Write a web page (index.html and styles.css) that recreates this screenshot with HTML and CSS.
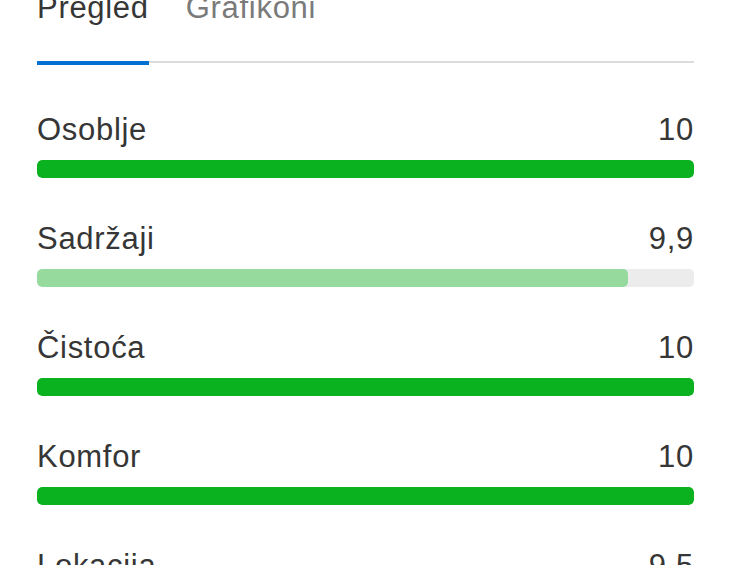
FILE: index.html
```html
<!DOCTYPE html>
<html>
	<head>
		<meta content="text/html;charset=utf-8" http-equiv="Content-Type">
		<meta name="viewport" content="initial-scale=1, user-scalable=no">
		<link rel="stylesheet" href="styles.css">
	</head>
	<body>
		<div class="wrapper">
			<div class="tabs">
				<span class="tab active">Pregled</span>
				<span class="tab">Grafikoni</span>
			</div>

			<div class="scores">
				<div class="score">
					<div class="score-head"><span>Osoblje</span><span>10</span></div>
					<div class="track"><div class="fill" style="width: 100%"></div></div>
				</div>
				<div class="score">
					<div class="score-head"><span>Sadržaji</span><span>9,9</span></div>
					<div class="track"><div class="fill fill-light" style="width: 90%"></div></div>
				</div>
				<div class="score">
					<div class="score-head"><span>Čistoća</span><span>10</span></div>
					<div class="track"><div class="fill" style="width: 100%"></div></div>
				</div>
				<div class="score">
					<div class="score-head"><span>Komfor</span><span>10</span></div>
					<div class="track"><div class="fill" style="width: 100%"></div></div>
				</div>
				<div class="score">
					<div class="score-head"><span>Lokacija</span><span>9,5</span></div>
					<div class="track"><div class="fill fill-light" style="width: 80%"></div></div>
				</div>
			</div>
		</div>
	</body>
</html>
```

FILE: styles.css
```css
body {
	margin: 0;
	font-family: "Liberation Sans", Helvetica, Arial, sans-serif;
	color: #363636;
	background: #fff;
	overflow: hidden;
}
.wrapper {
	padding: 0 37px;
}

.tabs {
	display: flex;
	gap: 37px;
	margin-top: -10px;
	border-bottom: 2px solid #dcdcdc;
	font-size: 31px;
	line-height: 36px;
	letter-spacing: 0.7px;
}
.tab {
	padding-bottom: 37px;
	margin-bottom: -2px;
	color: #7a7a7a;
}
.tab.active {
	color: #363636;
	border-bottom: 4px solid #0071d0;
	padding-bottom: 35px;
	margin-bottom: -4px;
}

.scores {
	padding-top: 49px;
}
.score {
	padding-bottom: 43px;
}
.score-head {
	display: flex;
	justify-content: space-between;
	font-size: 31px;
	line-height: 36px;
	letter-spacing: 0.7px;
	margin-bottom: 12px;
}
.track {
	height: 18px;
	border-radius: 5px;
	background: #ececec;
	overflow: hidden;
}
.fill {
	height: 100%;
	border-radius: 5px;
	background: #0bb21f;
}
.fill-light {
	background: #96da9e;
}
```
